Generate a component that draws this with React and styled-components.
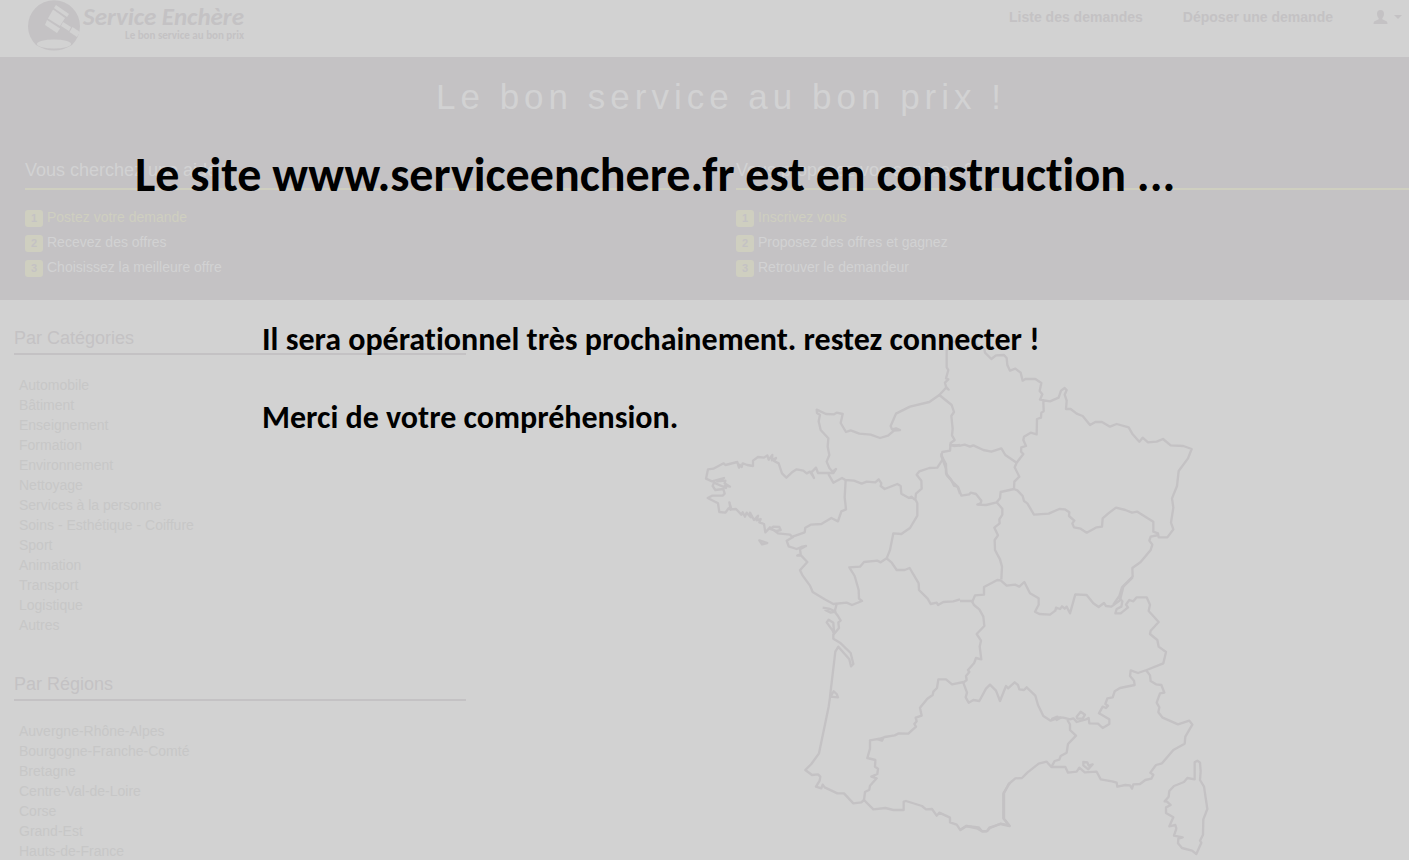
import React from "react";
import styled, { createGlobalStyle } from "styled-components";

const sans = '"Liberation Sans", Arial, sans-serif';
const humanist = 'Carlito, Lato, sans-serif';
const c = {
  page: "#d2d2d2",
  hero: "#c4c2c4",
  ink: "#c4c2c4",
  list: "#c7c7c7",
  light: "#d2d2d3",
  accent: "#cfcfc0",
};

const Global = createGlobalStyle`
  *, *::before, *::after { box-sizing: border-box; }
  body { margin: 0; background: ${c.page}; font: 14px/20px ${sans}; overflow-x: hidden; }
  h1, h2, ul, ol, p { margin: 0; padding: 0; font-weight: 400; }
  ul, ol { list-style: none; }
  a { color: inherit; text-decoration: none; }
`;

const Page = styled.div`
  position: relative;
  height: 100vh;
  overflow: hidden;
`;

const NavBar = styled.header`
  display: flex;
  justify-content: space-between;
  align-items: flex-start;
  height: 57px;
  padding: 0 7px 0 28px;
  color: ${c.ink};
`;

const Brand = styled.a`
  display: flex;
  gap: 3px;
`;

const BrandText = styled.span`
  display: flex;
  flex-direction: column;
  align-items: flex-end;
  padding-top: 4px;
  font-family: ${humanist};
  font-weight: 700;
`;

const BrandName = styled.span`
  font-size: 25px;
  line-height: 25px;
  font-style: italic;
`;

const BrandTagline = styled.span`
  font-size: 11px;
  line-height: 14px;
`;

const NavLinks = styled.nav`
  display: flex;
  gap: 40px;
  padding-top: 7px;
  font-size: 14px;
  font-weight: 700;
`;

const UserButton = styled.button`
  display: flex;
  align-items: center;
  gap: 6px;
  height: 20px;
  padding: 0;
  border: 0;
  background: none;
  color: inherit;
`;

const Hero = styled.section`
  overflow: hidden;
  padding: 20px 0;
  background: ${c.hero};
  color: ${c.light};
`;

const HeroInner = styled.div`
  margin: 0 -8px 0 25px;
`;

const Slogan = styled.h1`
  margin-bottom: 43px;
  font-size: 35px;
  line-height: 40px;
  letter-spacing: 5px;
  text-align: center;
`;

const HeroColumns = styled.div`
  display: grid;
  grid-template-columns: 1fr 1fr;
  gap: 30px;
`;

const HeroTitle = styled.h2`
  padding-bottom: 8px;
  border-bottom: 2px solid ${c.accent};
  font-size: 18px;
  line-height: 20px;
`;

const Steps = styled.ol`
  padding: 14px 0 1px;
`;

const Step = styled.li`
  display: flex;
  align-items: center;
  gap: 4px;
  height: 25px;
  color: ${(p) => (p.$active ? c.accent : c.light)};
`;

const StepNumber = styled.span`
  width: 18px;
  height: 17px;
  margin-top: 3px;
  border-radius: 3px;
  background: ${c.accent};
  color: ${c.hero};
  font-size: 11px;
  line-height: 17px;
  font-weight: 700;
  text-align: center;
`;

const Main = styled.main`
  display: grid;
  grid-template-columns: 1fr 2fr;
`;

const Sidebar = styled.aside`
  display: flex;
  flex-direction: column;
  gap: 39px;
  padding: 28px 4px 0 14px;
`;

const SideTitle = styled.h2`
  margin-bottom: 20px;
  padding-bottom: 5px;
  border-bottom: 2px solid ${c.ink};
  color: ${c.ink};
  font-size: 18px;
  line-height: 20px;
`;

const SideList = styled.ul`
  padding-left: 5px;
  color: ${c.list};
`;

const MapArea = styled.div`
  display: flex;
  justify-content: center;
  align-items: flex-start;
  padding: 30px 0 0 41px;
`;

const Notice = styled.div`
  position: absolute;
  top: 147px;
  left: 135px;
  color: #000;
  font-family: ${humanist};
  font-weight: 700;
  font-variant-ligatures: none;
  white-space: nowrap;
`;

const NoticeTitle = styled.p`
  font-size: 48px;
  line-height: 56px;
  font-weight: 700;
`;

const NoticeBody = styled.div`
  display: grid;
  gap: 38px;
  padding: 117px 0 0 127px;
`;

const NoticeLine = styled.p`
  font-size: 32px;
  line-height: 40px;
  font-weight: 700;
`;

function LogoMark() {
  return (
    <svg width="52" height="52" viewBox="0 0 52 52" aria-hidden="true">
      <path d="M8 45A26 26 0 1 1 44 45Q26 56 8 45Z" fill={c.ink} />
      <ellipse cx="26" cy="44" rx="17" ry="4.500" fill={c.page} />
      <g fill={c.page}>
        <path d="M28 5 41 14 39 17 26 8Z" />
        <path d="M25 9.500 37 18 32 26 20 18.500Z" />
        <path d="M19 20 32 28.500 29 33 17 25Z" />
        <path d="M35 22 43 27 41 31 33 26Z" />
        <path d="M44.500 27 52 32 49 37 41.500 32Z" />
      </g>
    </svg>
  );
}

function UserIcon() {
  return (
    <svg width="15" height="14" viewBox="0 0 15 14" fill="currentColor" aria-hidden="true">
      <path d="M7.500 0C9.800 0 11 1.500 11 3.600 11 5.600 10.300 7.300 9.300 8.200V9.300L13.500 11.300Q14.500 12 14.500 14H.5Q.5 12 1.500 11.300L5.700 9.300V8.200C4.700 7.300 4 5.600 4 3.600 4 1.500 5.200 0 7.500 0Z" />
    </svg>
  );
}

const outlines = [
  {
    at: [690, 340],
    lines: [
      "770,30 770,82 775,90 768,115 775,118 765,128 768,140 776,149 768,143 748,165 718,186 660,200 618,221 602,258 606,268 618,265 630,270 612,272 594,287 570,294 542,284 508,281 482,271 468,276 452,249 458,222 440,218 432,223 408,222 380,209 381,219 390,225 386,244 392,270 415,295 413,320 418,345 410,365 418,384 428,395 438,387 430,399 384,399 378,383 364,397 372,414 360,395 350,400 340,392 320,388 306,397 289,413 276,400 266,370 252,363 258,354 246,361 247,345 236,359 232,346 222,353 204,351 189,362 189,378 172,375 158,370 155,381 149,374 147,383 142,366 106,375 101,370 70,386 54,388 48,416 66,424 102,414 82,424 106,422 104,430 120,440 104,437 108,444 72,428 68,438 76,450 100,447 104,461 98,467 66,467 53,474 84,490 88,516 106,518 116,505 122,509 118,487 124,508 138,507 154,524 158,517 165,530 170,518 182,532 180,518 192,540 204,527 200,541 212,537 208,547 222,552 226,577 240,562 264,580 300,584 308,592 290,602 296,619 320,627 334,621 348,618 330,628 332,642 322,647 333,646 352,666 330,691 338,707 360,737 368,756 404,778 430,792 470,788 486,795 516,783 507,776 506,750 494,708 478,682 510,680 522,666 562,662 572,667 590,655 600,630 610,580 634,582 660,564 682,527 682,490 676,478 678,461 695,446 694,422 680,404 688,394 718,384 742,383 758,358",
      "415,402 430,428 456,414 466,420 492,422 515,431 530,425 556,427 566,418 574,430 572,438 584,447 622,432 632,438 634,461 657,474 664,470 675,480",
      "467,420 464,472 468,508 454,514 444,544 424,534 394,552 362,554 346,563 344,577 308,590",
      "748,165 785,195 792,216 784,228 788,266 786,286 794,300 782,309 780,332 757,336 754,348 768,386 770,405 790,428 803,440 810,462",
      "590,655 605,668 620,690 644,690 659,684 686,730 687,750 713,776 722,792 740,788 744,795 760,786 790,784 810,778",
      "780,314 792,318 810,315",
      "208,601 232,609 216,613Z",
      "240,567 260,573 272,570 268,561 250,560Z",
    ],
  },
  {
    at: [940, 340],
    lines: [
      "22,30 28,8 95,-5 115,20 133,27 135,38 154,57 168,46 192,45 200,54 202,75 210,92 226,86 242,98 248,122 256,117 286,117 304,129 299,153 307,163 300,179 330,184 356,173 363,152 374,144 380,150 374,164 380,182 378,207 392,207 410,221 428,228 450,255 466,246 486,246 510,260 530,252 566,262 578,283 598,305 608,293 624,307 650,305 669,297 692,316 730,318 755,327 744,355 716,393 711,438 696,475 700,503 693,548 700,568 682,592 656,592 654,580 640,575 640,545 592,515 576,518 556,510 528,503 505,520 488,535 486,560 470,562 440,578 422,566 402,562 397,550 403,542 387,528 388,517 374,508 358,507 326,521 282,524 262,490 252,483 248,468 232,451 222,447 223,425 238,410 224,382 230,368 250,342 243,335 244,322 258,318 250,300 252,290 272,278 290,283 291,237 303,233 304,218 311,214 310,181",
      "28,315 60,317 74,314 90,320 100,316 130,330 154,335 184,325 196,345 230,368",
      "3,340 10,358 18,372 18,400 34,420 42,437 54,441 64,467 88,463 92,458 108,462 124,482 122,490 112,494 138,495 170,487 180,475 182,456 222,447",
      "170,487 187,506 187,524 178,538 179,550 163,563 174,586 164,600 165,630 180,658 186,680 184,718",
      "656,585 632,590 628,602 637,614 632,630 602,666 577,684 578,710 546,742 538,768 520,794",
    ],
  },
  {
    at: [790, 560],
    lines: [
      "140,132 134,155 144,168 152,182 145,187 147,204 132,222 128,212 110,187 116,179 130,188 132,218",
      "130,222 130,236 150,248 182,279 190,312 183,319 178,298 145,260 136,275 120,410 144,412 140,402 131,394 120,412 116,440 87,580 64,612 46,630 66,645 84,643 91,650 89,662 78,680 94,685 98,674 104,682 142,700 162,700 190,730 214,727 222,720 250,748 286,744 310,750 341,750 341,725 348,723 396,738 408,748 426,747 440,767 448,758 480,773 480,787 500,794 511,810 530,798 566,802 576,814 592,813 600,804 632,791 658,797 640,775 640,700 660,668",
      "98,143 120,147 136,155 122,158 104,149",
      "222,720 225,696 238,689 240,677 260,655 244,650 262,642 264,626 255,620 256,600 232,594 240,566 240,541 280,534 276,542 264,538 284,531 314,526 326,520 355,521 378,500 373,492 380,484 377,473 395,467 390,443 412,416 428,405 430,395 441,384 445,358 468,358 486,373 521,366",
    ],
  },
  {
    at: [960, 570],
    lines: [
      "0,93 38,93 45,76 72,74 72,51 112,30 122,31 140,47 165,44 178,50 193,36 210,70 236,85 236,104 225,125 238,132 270,134 286,122 288,113 300,117 306,109 314,116 320,110 330,130 346,73 380,75 400,100 416,111 432,99 438,108 454,110 480,91 490,50 518,22",
      "36,94 42,105 58,118 70,140 73,168 50,192 63,212 59,230 64,268 48,264 42,280 24,300 28,306 18,318 20,330 10,338 21,368 17,382 26,398 40,390 58,393 78,356 90,344 108,362 120,393 138,348 144,355 164,337 174,345 178,358 192,360 200,352 226,377 234,405 250,438 272,452 298,442 310,443 330,448 340,445 350,456 378,448 386,444 388,460 414,461 428,474 448,462 448,448 417,430 428,410 438,414 444,407 436,402 442,385 458,382 464,364 480,354 524,345 522,332 510,318 512,301 534,309 560,300 610,280 618,246 596,230 592,210 570,192 572,182 596,156 566,123 570,104 560,82 530,82 520,94 508,90 498,104 504,112 482,130 466,130 470,117 484,110 487,94 478,84",
      "558,300 570,316 572,333 588,343 604,345 613,368 600,370 590,398 598,412 595,427 608,443 654,463 688,452 697,464 676,500 674,521 640,540 606,580 588,585 571,608 580,614 574,626 556,630 540,642 520,643 516,656 510,646 496,645 472,650 470,638 456,634 422,628 410,605 374,607 358,593 350,605 324,608 316,591 274,591 260,575 236,581 202,608 186,624 166,625 146,642 132,670 132,746 149,768 122,762 88,773 80,784 66,784 50,775 18,768 0,780",
      "274,591 284,573 298,569 302,558 320,548 324,522 348,497 330,480 330,463 322,450",
      "350,440 362,425 375,434 368,446 352,446Z",
      "370,576 382,577 386,587 398,583 385,598 370,586Z",
      "274,447 292,440 290,450 304,442",
      "704,577 712,572 720,578 722,604 720,630 732,650 742,717 730,748 729,794 720,812 724,818 709,852 696,842 666,834 654,820 655,806 668,802 642,797 649,776 646,765 628,769 640,742 618,729 618,712 632,705 621,695 614,694 626,680 628,663 642,648 672,636 682,624 704,628Z",
    ],
  },
];

function FranceMap() {
  return (
    <svg width="540" height="530" viewBox="690 330 540 530" role="img" aria-label="Carte des régions de France">
      <g fill="none" stroke={c.ink} strokeWidth="7" strokeLinejoin="round">
        {outlines.map(({ at, lines }) => (
          <g key={at.join()} transform={`translate(${at[0]} ${at[1]}) scale(${1 / 3})`}>
            {lines.map((d) => (
              <path key={d} d={`M${d}`} />
            ))}
          </g>
        ))}
      </g>
    </svg>
  );
}

function HowTo({ title, steps }) {
  return (
    <div>
      <HeroTitle>{title}</HeroTitle>
      <Steps>
        {steps.map((s, i) => (
          <Step key={s} $active={i === 0}>
            <StepNumber>{i + 1}</StepNumber>
            {s}
          </Step>
        ))}
      </Steps>
    </div>
  );
}

function LinkGroup({ title, items }) {
  return (
    <section>
      <SideTitle>{title}</SideTitle>
      <SideList>
        {items.map((t) => (
          <li key={t}>
            <a href="#">{t}</a>
          </li>
        ))}
      </SideList>
    </section>
  );
}

const categories = ["Automobile", "Bâtiment", "Enseignement", "Formation", "Environnement", "Nettoyage", "Services à la personne", "Soins - Esthétique - Coiffure", "Sport", "Animation", "Transport", "Logistique", "Autres"];
const regions = ["Auvergne-Rhône-Alpes", "Bourgogne-Franche-Comté", "Bretagne", "Centre-Val-de-Loire", "Corse", "Grand-Est", "Hauts-de-France"];

export default function App() {
  return (
    <Page>
      <Global />
      <NavBar>
        <Brand href="#">
          <LogoMark />
          <BrandText>
            <BrandName>Service Enchère</BrandName>
            <BrandTagline>Le bon service au bon prix</BrandTagline>
          </BrandText>
        </Brand>
        <NavLinks>
          <a href="#">Liste des demandes</a>
          <a href="#">Déposer une demande</a>
          <UserButton aria-label="Mon compte">
            <UserIcon />
            <svg width="8" height="4" viewBox="0 0 8 4" fill="currentColor" aria-hidden="true">
              <path d="M0 0H8L4 4Z" />
            </svg>
          </UserButton>
        </NavLinks>
      </NavBar>
      <Hero>
        <HeroInner>
          <Slogan>Le bon service au bon prix !</Slogan>
          <HeroColumns>
            <HowTo title="Vous cherchez une aide ?" steps={["Postez votre demande", "Recevez des offres", "Choisissez la meilleure offre"]} />
            <HowTo title="Vous proposez vos services ?" steps={["Inscrivez vous", "Proposez des offres et gagnez", "Retrouver le demandeur"]} />
          </HeroColumns>
        </HeroInner>
      </Hero>
      <Main>
        <Sidebar>
          <LinkGroup title="Par Catégories" items={categories} />
          <LinkGroup title="Par Régions" items={regions} />
        </Sidebar>
        <MapArea>
          <FranceMap />
        </MapArea>
      </Main>
      <Notice role="status">
        <NoticeTitle>Le site www.serviceenchere.fr est en construction ...</NoticeTitle>
        <NoticeBody>
          <NoticeLine>Il sera opérationnel très prochainement. restez connecter !</NoticeLine>
          <NoticeLine>Merci de votre compréhension.</NoticeLine>
        </NoticeBody>
      </Notice>
    </Page>
  );
}
